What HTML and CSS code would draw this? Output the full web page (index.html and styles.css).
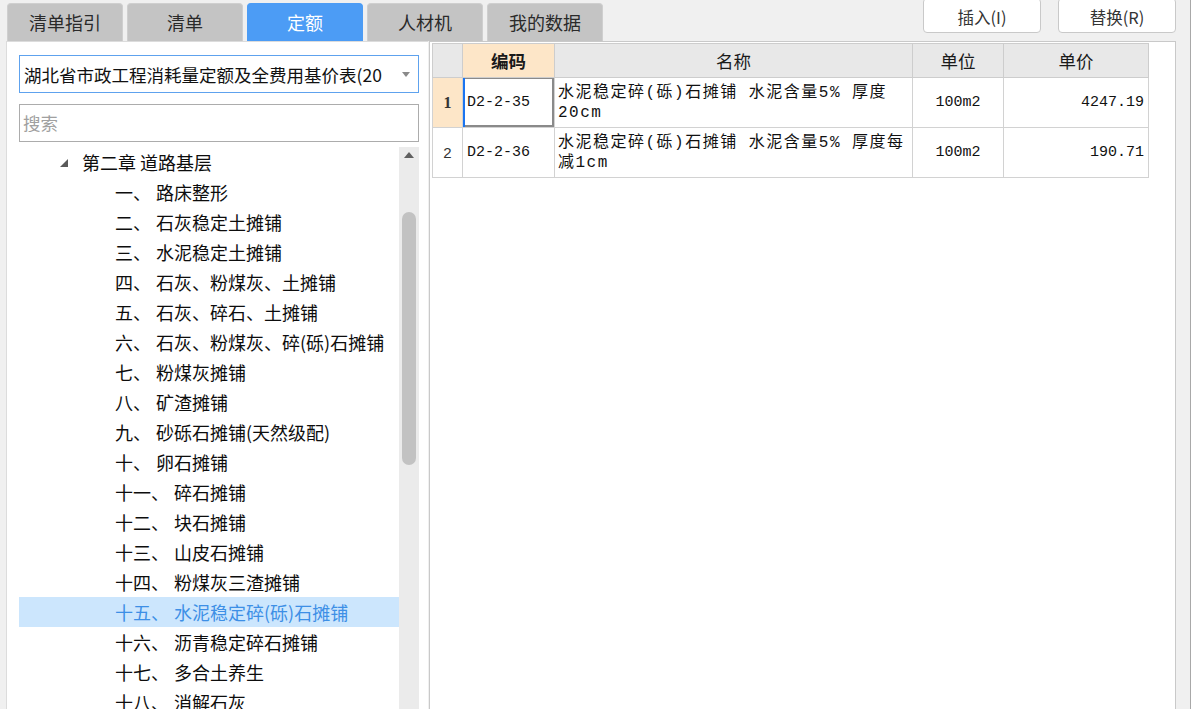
FILE: index.html
```html
<!DOCTYPE html>
<html lang="zh">
<head>
<meta charset="utf-8">
<title>定额</title>
<link rel="stylesheet" href="styles.css">
</head>
<body>
<div class="app">
  <header class="topbar">
    <nav class="tabs">
      <div class="tab">清单指引</div>
      <div class="tab">清单</div>
      <div class="tab active">定额</div>
      <div class="tab">人材机</div>
      <div class="tab">我的数据</div>
    </nav>
    <div class="actions">
      <button class="btn">插入(I)</button>
      <button class="btn">替换(R)</button>
    </div>
  </header>
  <main class="main">
    <section class="left">
      <div class="select">
        <span class="select-text">湖北省市政工程消耗量定额及全费用基价表(20</span>
        <svg class="select-arrow" width="8" height="5" viewBox="0 0 8 5"><polygon points="0,0 8,0 4,5" fill="#8a8a8a"/></svg>
      </div>
      <div class="search">搜索</div>
      <div class="treewrap">
        <ul class="tree">
          <li class="node top"><svg class="caret" width="8" height="8" viewBox="0 0 8 8"><polygon points="8,0 8,8 0,8" fill="#5a5a5a"/></svg><span>第二章 道路基层</span></li>
          <li class="node"><span class="num">一、</span><span class="name">路床整形</span></li>
          <li class="node"><span class="num">二、</span><span class="name">石灰稳定土摊铺</span></li>
          <li class="node"><span class="num">三、</span><span class="name">水泥稳定土摊铺</span></li>
          <li class="node"><span class="num">四、</span><span class="name">石灰、粉煤灰、土摊铺</span></li>
          <li class="node"><span class="num">五、</span><span class="name">石灰、碎石、土摊铺</span></li>
          <li class="node"><span class="num">六、</span><span class="name">石灰、粉煤灰、碎(砾)石摊铺</span></li>
          <li class="node"><span class="num">七、</span><span class="name">粉煤灰摊铺</span></li>
          <li class="node"><span class="num">八、</span><span class="name">矿渣摊铺</span></li>
          <li class="node"><span class="num">九、</span><span class="name">砂砾石摊铺(天然级配)</span></li>
          <li class="node"><span class="num">十、</span><span class="name">卵石摊铺</span></li>
          <li class="node"><span class="num">十一、</span><span class="name">碎石摊铺</span></li>
          <li class="node"><span class="num">十二、</span><span class="name">块石摊铺</span></li>
          <li class="node"><span class="num">十三、</span><span class="name">山皮石摊铺</span></li>
          <li class="node"><span class="num">十四、</span><span class="name">粉煤灰三渣摊铺</span></li>
          <li class="node selected"><span class="num">十五、</span><span class="name">水泥稳定碎(砾)石摊铺</span></li>
          <li class="node"><span class="num">十六、</span><span class="name">沥青稳定碎石摊铺</span></li>
          <li class="node"><span class="num">十七、</span><span class="name">多合土养生</span></li>
          <li class="node"><span class="num">十八、</span><span class="name">消解石灰</span></li>
        </ul>
        <div class="scrollbar">
          <svg class="sb-up" width="10" height="6" viewBox="0 0 10 6"><polygon points="0,6 10,6 5,0" fill="#606060"/></svg>
          <div class="thumb"></div>
        </div>
      </div>
    </section>
    <section class="right">
      <table class="grid">
        <colgroup>
          <col class="c-idx"><col class="c-code"><col class="c-name"><col class="c-unit"><col class="c-price">
        </colgroup>
        <thead>
          <tr>
            <th class="h-idx"></th>
            <th class="h-code">编码</th>
            <th>名称</th>
            <th>单位</th>
            <th>单价</th>
          </tr>
        </thead>
        <tbody>
          <tr>
            <td class="idx cur">1</td>
            <td class="code focus">D2-2-35</td>
            <td class="name">水泥稳定碎(砾)石摊铺 水泥含量5% 厚度20cm</td>
            <td class="unit">100m2</td>
            <td class="price">4247.19</td>
          </tr>
          <tr>
            <td class="idx">2</td>
            <td class="code">D2-2-36</td>
            <td class="name">水泥稳定碎(砾)石摊铺 水泥含量5% 厚度每减1cm</td>
            <td class="unit">100m2</td>
            <td class="price">190.71</td>
          </tr>
        </tbody>
      </table>
    </section>
  </main>
</div>
</body>
</html>
```
FILE: styles.css
```css
* { box-sizing: border-box; }
html, body { margin: 0; padding: 0; }
body {
  background: #f0f0f0;
  font-family: "Noto Sans CJK SC", "Noto Sans", sans-serif;
  color: #111;
  overflow: hidden;
}
.app {
  height: 709px;
  display: flex;
  flex-direction: column;
  padding-left: 6px;
  border-right: 1px solid #a8a8a8;
}
.topbar {
  height: 41px;
  flex: none;
  display: flex;
  justify-content: space-between;
  align-items: flex-start;
}
.tabs {
  display: flex;
  gap: 4px;
  margin-top: 3px;
  margin-left: 1px;
}
.tab {
  width: 116px;
  height: 38px;
  background: #c4c4c4;
  border: 1px solid #cfcfcf;
  border-bottom: none;
  border-radius: 4px 4px 0 0;
  font-size: 18px;
  line-height: 36px;
  text-align: center;
  color: #2a2a2a;
}
.tab.active {
  background: #4c9cf5;
  border-color: #4c9cf5;
  color: #fff;
}
.actions {
  display: flex;
  gap: 17px;
  margin-right: 14px;
  margin-top: -2px;
}
.btn {
  width: 118px;
  height: 35px;
  background: #fff;
  border: 1px solid #c9c9c9;
  border-radius: 4px;
  font-family: "Noto Sans CJK SC", "Noto Sans", sans-serif;
  font-size: 16.5px;
  color: #333;
  padding: 0;
  padding-top: 2px;
}
.main {
  flex: 1;
  display: flex;
  min-height: 0;
}
.left {
  width: 422px;
  flex: none;
  background: #fff;
  border-left: 1px solid #dcdcdc;
  border-top: 1px solid #dcdcdc;
  padding: 13px 9px 0 12px;
  display: flex;
  flex-direction: column;
  min-height: 0;
}
.select {
  height: 38px;
  border: 1px solid #5ea2ee;
  display: flex;
  align-items: center;
  padding: 0 8px 0 4px;
  font-size: 17.5px;
  color: #111;
  flex: none;
}
.select-text {
  flex: 1;
  white-space: nowrap;
  overflow: hidden;
}
.select-arrow { flex: none; margin-left: 6px; }
.search {
  height: 38px;
  margin-top: 11px;
  border: 1px solid #acacac;
  font-size: 17.5px;
  line-height: 36px;
  padding-left: 3px;
  color: #a0a0a0;
  flex: none;
}
.treewrap {
  margin-top: 5px;
  flex: 1;
  display: flex;
  min-height: 0;
  overflow: hidden;
}
.tree {
  list-style: none;
  margin: 0;
  padding: 0;
  width: 380px;
  flex: none;
}
.node {
  height: 30px;
  display: flex;
  align-items: center;
  font-size: 18px;
  padding-left: 96px;
  white-space: nowrap;
  color: #0d0d0d;
}
.node.top { padding-left: 41px; }
.caret { margin-right: 14px; margin-top: 2px; }
.name { margin-left: 5px; }
.node.selected {
  background: #cce6fd;
  color: #3d8fe6;
}
.scrollbar {
  width: 20px;
  flex: none;
  background: #ebebeb;
  display: flex;
  flex-direction: column;
  align-items: center;
}
.sb-up { margin-top: 5px; }
.thumb {
  margin-top: 54px;
  width: 14px;
  height: 253px;
  background: #c2c2c2;
  border-radius: 7px;
}
.right {
  flex: none;
  width: 747px;
  margin-left: 1px;
  background: #fff;
  border: 1px solid #c9c9c9;
  border-bottom: none;
  padding: 1px 2px;
}
.grid {
  border-collapse: collapse;
  table-layout: fixed;
  width: 716px;
}
.c-idx { width: 30px; }
.c-code { width: 92px; }
.c-name { width: 358px; }
.c-unit { width: 91px; }
.c-price { width: 145px; }
.grid th {
  height: 34px;
  background: #e8e8e8;
  border: 1px solid #cdcdcd;
  font-weight: normal;
  font-size: 17.5px;
  color: #1a1a1a;
  padding: 0;
}
.grid th.h-code {
  background: #fde6c8;
  font-weight: bold;
}
.grid td {
  height: 50px;
  border: 1px solid #d2d2d2;
  padding: 0 3px;
  font-family: "Liberation Mono", "Noto Sans CJK SC", monospace;
  font-size: 15px;
  color: #111;
  vertical-align: middle;
}
.grid td.idx {
  text-align: center;
  font-family: "Liberation Sans", "Noto Sans", sans-serif;
  font-size: 15px;
  color: #333;
}
.grid td.idx.cur {
  background: #fde6c8;
  font-weight: bold;
  font-family: "Liberation Serif", serif;
  font-size: 16px;
}
.grid td.code { padding-left: 4px; }
.grid td.code.focus {
  box-shadow: inset 2px 0 0 #1a74f0, inset -2px -2px 0 #8a8a8a, inset 0 1px 0 #8a8a8a;
}
.grid td.name {
  font-size: 16px;
  letter-spacing: 1.5px;
  line-height: 20px;
  padding-right: 4px;
}
.grid td.unit { text-align: center; }
.grid td.price { text-align: right; padding-right: 4px; }
```
